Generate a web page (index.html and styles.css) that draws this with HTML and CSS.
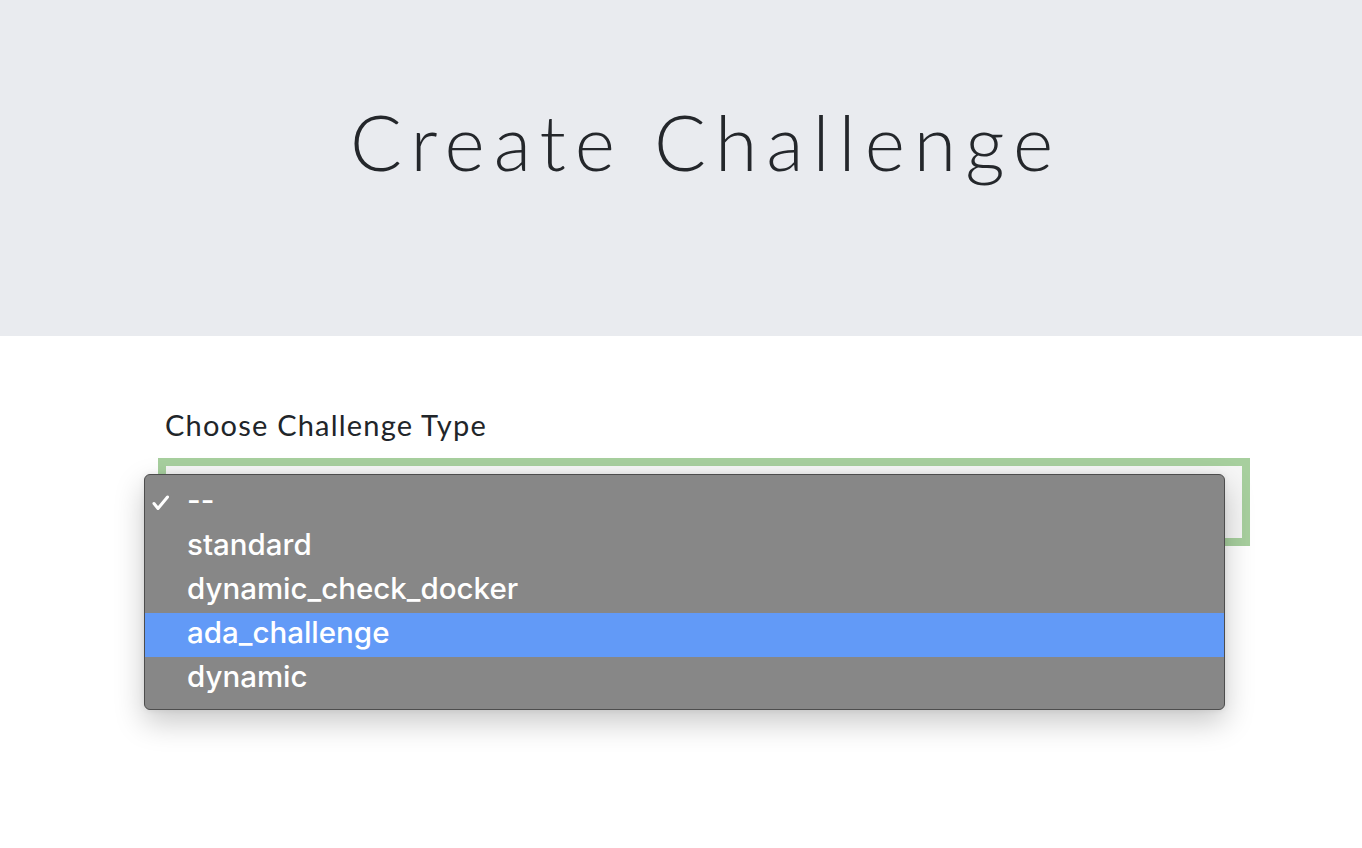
FILE: index.html
```html
<!DOCTYPE html>
<html>
<head>
<meta charset="utf-8">
<link rel="stylesheet" href="styles.css">
</head>
<body>
<header class="jumbo">
  <h1 class="title">Create Challenge</h1>
</header>
<main class="content">
  <label class="label">Choose Challenge Type</label>
  <div class="select-wrap">
    <div class="select"></div>
    <ul class="menu">
      <li class="opt checked"><svg class="check" width="18" height="16" viewBox="0 0 18 16"><path d="M2 8.5 L6 13.5 L15.5 2" fill="none" stroke="#fff" stroke-width="3" stroke-linecap="round" stroke-linejoin="round"/></svg>--</li>
      <li class="opt">standard</li>
      <li class="opt">dynamic_check_docker</li>
      <li class="opt active">ada_challenge</li>
      <li class="opt">dynamic</li>
    </ul>
  </div>
</main>
</body>
</html>
```
FILE: styles.css
```css
html, body { margin: 0; padding: 0; background: #fff; }
body {
  font-family: "Lato", "Liberation Sans", sans-serif;
  color: #212529;
  min-height: 848px;
}
.jumbo {
  background: #e9ebef;
  height: 336px;
  display: flex;
  justify-content: center;
  box-sizing: border-box;
  padding-left: 50px;
}
.title {
  margin: 0;
  padding-top: 103px;
  font-family: "Lato", sans-serif;
  font-weight: 300;
  font-size: 77px;
  line-height: 1;
  letter-spacing: 9px;
  color: #24272b;
}
.content {
  padding: 70px 112px 0 158px;
  min-height: 442px;
}
.label {
  display: block;
  font-size: 29px;
  letter-spacing: 1.2px;
  padding-left: 7px;
  line-height: 38px;
  margin-bottom: 14px;
}
.select-wrap { position: relative; }
.select {
  height: 72px;
  border: 8px solid #a7cf9e;
  background: #f6f6f6;
}
.menu {
  position: absolute;
  left: -14px;
  top: 16px;
  width: 1079px;
  margin: 0;
  padding: 6px 0 8px;
  list-style: none;
  background: #878787;
  border: 1px solid #4d4d4d;
  border-radius: 6px;
  box-shadow: 0 12px 30px rgba(0,0,0,0.22), 0 0 6px rgba(0,0,0,0.08);
  z-index: 5;
}
.opt {
  position: relative;
  box-sizing: border-box;
  height: 44px;
  line-height: 38px;
  padding: 0 0 6px 42px;
  font-family: "Inter", "Roboto", sans-serif;
  font-size: 29.5px;
  font-weight: 500;
  color: #fff;
}
.opt.active { background: #629af7; }
.check {
  position: absolute;
  left: 7px;
  top: 14px;
}
```
